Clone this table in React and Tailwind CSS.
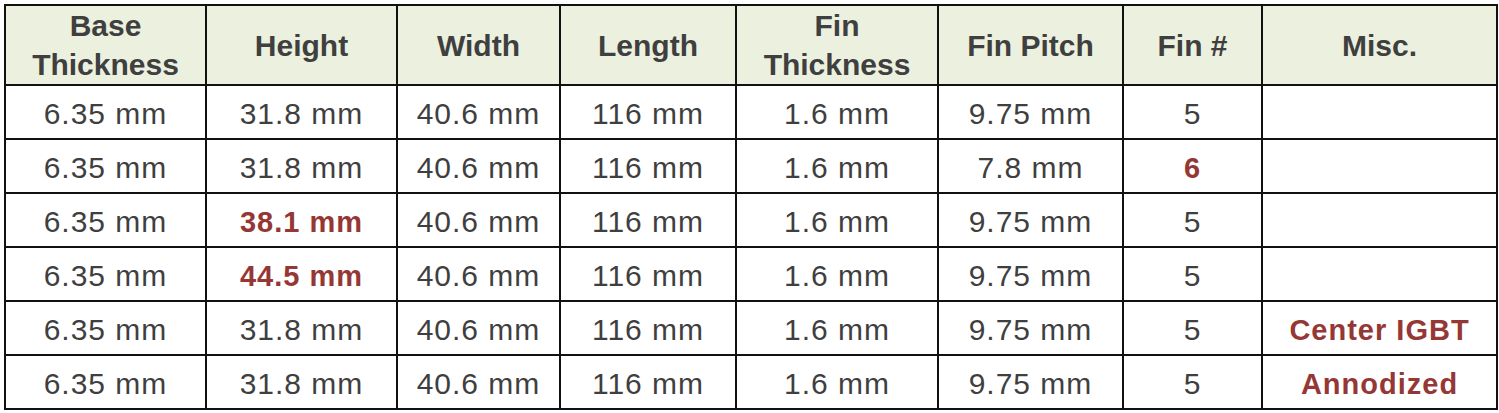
const columns = [
  { label: ["Base", "Thickness"], w: "w-[201px]" },
  { label: ["Height"], w: "w-[191px]" },
  { label: ["Width"], w: "w-[163px]" },
  { label: ["Length"], w: "w-[176px]" },
  { label: ["Fin", "Thickness"], w: "w-[202px]" },
  { label: ["Fin Pitch"], w: "w-[185px]" },
  { label: ["Fin #"], w: "w-[139px]" },
  { label: ["Misc."], w: "w-[235px]" },
];

// cells marked with * are highlighted in red bold
const rows = [
  ["6.35 mm", "31.8 mm", "40.6 mm", "116 mm", "1.6 mm", "9.75 mm", "5", ""],
  ["6.35 mm", "31.8 mm", "40.6 mm", "116 mm", "1.6 mm", "7.8 mm", "*6", ""],
  ["6.35 mm", "*38.1 mm", "40.6 mm", "116 mm", "1.6 mm", "9.75 mm", "5", ""],
  ["6.35 mm", "*44.5 mm", "40.6 mm", "116 mm", "1.6 mm", "9.75 mm", "5", ""],
  ["6.35 mm", "31.8 mm", "40.6 mm", "116 mm", "1.6 mm", "9.75 mm", "5", "*Center IGBT"],
  ["6.35 mm", "31.8 mm", "40.6 mm", "116 mm", "1.6 mm", "9.75 mm", "5", "*Annodized"],
];

export default function App() {
  return (
    <div className="w-[1499px] h-[413px] bg-white pt-[4px] pl-[4px] font-['Liberation_Sans',Arial,sans-serif] text-[#3f3f3f]">
      <table className="table-fixed border-collapse">
        <colgroup>
          {columns.map((c, i) => (
            <col key={i} className={c.w} />
          ))}
        </colgroup>
        <thead>
          <tr className="h-[79px] bg-[#ebf1de]">
            {columns.map((c, i) => (
              <th
                key={i}
                className="border-2 border-[#111] text-center align-middle font-bold text-[30px] leading-[39px] p-0"
              >
                {c.label.map((l) => (
                  <div key={l}>{l}</div>
                ))}
              </th>
            ))}
          </tr>
        </thead>
        <tbody>
          {rows.map((r, ri) => (
            <tr key={ri} className="h-[54px]">
              {r.map((v, ci) => {
                const hot = v.startsWith("*");
                return (
                  <td
                    key={ci}
                    className={`border-2 border-[#111] text-center align-middle p-0 pt-[3px] leading-[34px] tracking-[1px] ${
                      hot ? "text-[#953735] font-bold text-[29px]" : "text-[30px]"
                    }`}
                  >
                    {hot ? v.slice(1) : v}
                  </td>
                );
              })}
            </tr>
          ))}
        </tbody>
      </table>
    </div>
  );
}
